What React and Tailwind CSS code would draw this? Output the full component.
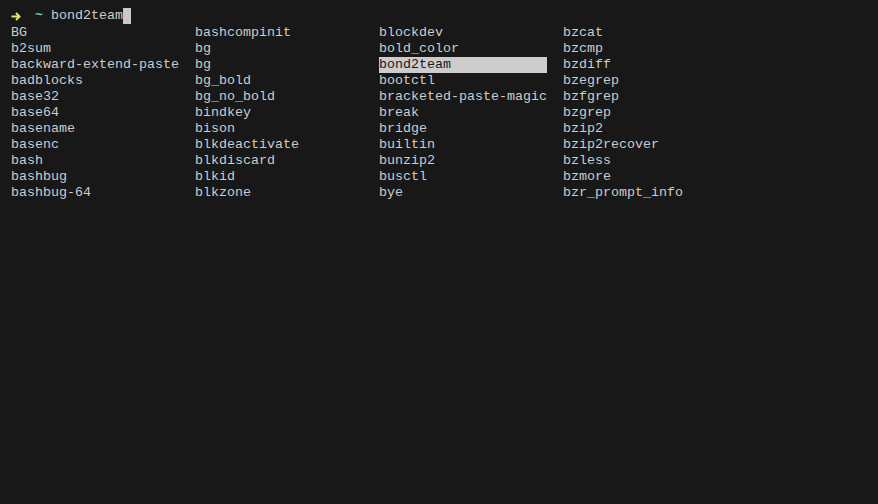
const columns = [
  ['BG', 'b2sum', 'backward-extend-paste', 'badblocks', 'base32', 'base64', 'basename', 'basenc', 'bash', 'bashbug', 'bashbug-64'],
  ['bashcompinit', 'bg', 'bg', 'bg_bold', 'bg_no_bold', 'bindkey', 'bison', 'blkdeactivate', 'blkdiscard', 'blkid', 'blkzone'],
  ['blockdev', 'bold_color', 'bond2team', 'bootctl', 'bracketed-paste-magic', 'break', 'bridge', 'builtin', 'bunzip2', 'busctl', 'bye'],
  ['bzcat', 'bzcmp', 'bzdiff', 'bzegrep', 'bzfgrep', 'bzgrep', 'bzip2', 'bzip2recover', 'bzless', 'bzmore', 'bzr_prompt_info'],
];

export default function App() {
  return (
    <div
      className="w-[878px] h-[504px] bg-[#181818] text-[#cccccc] pt-[8px] pl-[11px] text-[13.33px] leading-[16px] whitespace-pre"
      style={{ fontFamily: '"Liberation Mono", "DejaVu Sans Mono", monospace' }}
    >
      <div className="flex items-center h-[16px]">
        <span className="w-[16px] h-[16px] flex items-center">
          <svg width="10" height="9" viewBox="0 0 10 9">
            <path d="M0.5 4.5H8.5M5 1L8.5 4.5L5 8" fill="none" stroke="#d7ea6f" strokeWidth="2" />
          </svg>
        </span>
        <span className="w-[8px]"> </span>
        <span className="text-[#6ac6d4] font-bold">~</span>
        <span> bond2team</span>
        <span className="inline-block w-[8px] h-[16px] bg-[#c8c8c8]"></span>
      </div>
      <div className="flex pt-[1px]">
        {columns.map((col, i) => (
          <div key={i} className="flex flex-col w-[184px]">
            {col.map((name, j) => (
              <div key={j} className="h-[16px]">
                {name === 'bond2team' && i === 2 ? (
                  <span className="block w-[168px] bg-[#cccccc] text-[#181818]">{name}</span>
                ) : (
                  name
                )}
              </div>
            ))}
          </div>
        ))}
      </div>
    </div>
  );
}
